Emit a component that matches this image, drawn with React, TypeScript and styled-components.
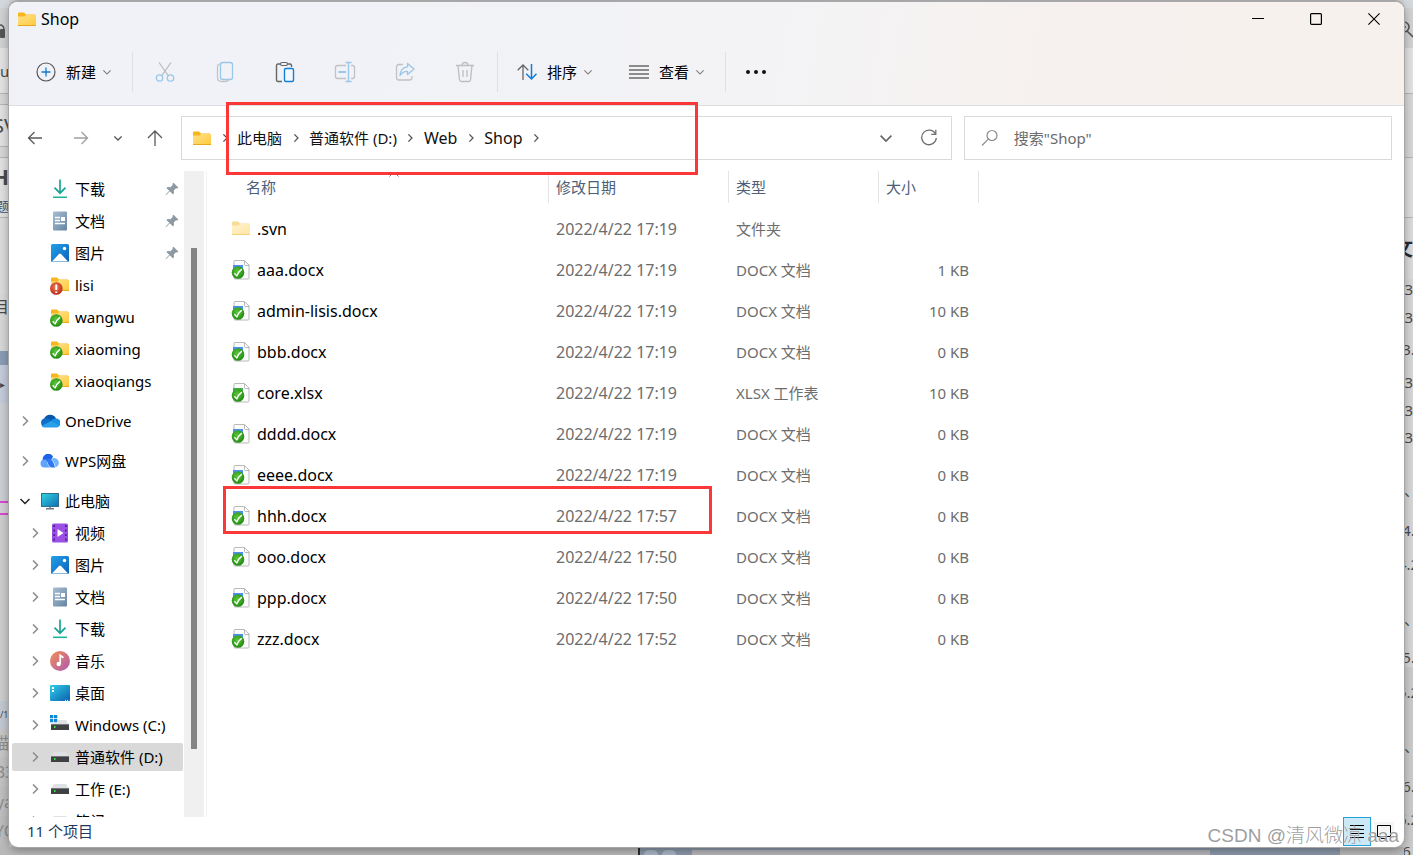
import React from "react";
import styled, { createGlobalStyle, css } from "styled-components";

const GlobalStyle = createGlobalStyle`
  *, *::before, *::after { box-sizing: border-box; }
  body {
    margin: 0;
    font-family: "Noto Sans", "Noto Sans CJK SC", sans-serif;
    font-size: 15px;
    line-height: 20px;
    color: #000;
  }
  button, input { font: inherit; color: inherit; }
`;

/* ---------- desktop and the page behind the window ---------- */

const Desktop = styled.div`
  position: relative;
  display: grid;
  grid-template-columns: 9px minmax(0, 1fr) 9px;
  grid-template-rows: minmax(0, 1fr) 8px;
  height: 100vh;
  min-height: 480px;
  overflow: hidden;
  background: #cfcfcf;
`;

const Strip = styled.div`
  grid-row: 1 / span 2;
  overflow: hidden;
  display: flex;
  flex-direction: column;
`;

const Piece = styled.div<{ $h: number; $bg?: string; $fg?: string; $size?: number; $bold?: boolean; $line?: boolean; $frame?: boolean; $at?: "start" | "center" | "end"; $low?: boolean }>`
  flex: none;
  display: flex;
  align-items: ${(p) => (p.$low ? "flex-end" : "center")};
  justify-content: ${(p) => p.$at ?? "start"};
  height: ${(p) => p.$h}px;
  background: ${(p) => p.$bg ?? "#d8d8d8"};
  color: ${(p) => p.$fg ?? "#4a4a4a"};
  font-size: ${(p) => p.$size ?? 16}px;
  font-weight: ${(p) => (p.$bold ? 700 : 400)};
  white-space: nowrap;
  overflow: hidden;
  ${(p) => p.$line && css`border-bottom: 1px solid #b4b4b4;`}
  ${(p) => p.$frame && css`border: solid #d84ad0; border-width: 2px 0;`}
`;

const BottomStrip = styled.div`
  grid-column: 2;
  grid-row: 2;
  display: grid;
  grid-template-columns: 629fr 702fr 64fr;
  background: #b9b9b9;
`;

const BrowserEdge = styled.div`
  display: flex;
  align-items: flex-end;
  gap: 4px;
  padding: 2px 130px 0 4px;
  border-left: 2px solid #2b2d33;
  background: #8b98aa;
`;

const RoundNub = styled.span`
  width: 14px;
  height: 5px;
  border-radius: 7px 7px 0 0;
  background: #a9b6c6;
`;

const UrlEdge = styled.span`
  flex: 1;
  height: 5px;
  margin-left: 12px;
  background: #b5b5ba;
`;

/* ---------- window ---------- */

const Window = styled.main`
  position: relative;
  grid-column: 2;
  grid-row: 1;
  z-index: 1;
  display: flex;
  flex-direction: column;
  margin-top: 1px;
  border-radius: 9px;
  overflow: hidden;
  background: #fff;
  border-top: 1px solid #a9a9ad;
  box-shadow: 0 0 0 1px #a6a6a6, 0 3px 10px rgba(0, 0, 0, 0.35);
`;

const Chrome = styled.header`
  flex: none;
  border-bottom: 1px solid #dedee2;
  background: linear-gradient(100deg, #f0f2f8 0%, #f1f2f7 25%, #f3f3f5 55%, #f6f1ee 75%, #f7f1ee 100%);
`;

const TitleBar = styled.div`
  display: flex;
  align-items: center;
  height: 36px;
  padding: 0 0 2px 8px;
`;

const Title = styled.h1`
  flex: 1;
  margin: 0 0 0 4px;
  font-size: 16px;
  font-weight: 400;
`;

const PlainButton = styled.button`
  display: flex;
  align-items: center;
  justify-content: center;
  padding: 0;
  border: 0;
  background: none;
`;

const CaptionButton = styled(PlainButton)`
  width: 58px;
  height: 34px;
`;

const CaptionButtons = styled.div`
  display: flex;
  margin-right: 1px;
`;

const Toolbar = styled.div`
  display: flex;
  align-items: center;
  height: 67px;
  padding-left: 11px;
`;

const MenuButton = styled(PlainButton)`
  height: 40px;
  padding: 0 21px 0 16px;
  gap: 10px;

  svg:last-child { margin-left: -3px; }
`;

const ToolButton = styled(PlainButton)`
  width: 60px;
  height: 40px;
`;

const ToolGroup = styled.div`
  display: flex;
  margin: 0 2px;
`;

const Divider = styled.span<{ $tight?: boolean }>`
  width: 1px;
  height: 40px;
  margin-right: ${(p) => (p.$tight ? 0 : 3)}px;
  background: #dfe0e5;
`;

/* ---------- address row ---------- */

const AddressRow = styled.div`
  position: relative;
  flex: none;
  display: flex;
  align-items: center;
  height: 65px;
  padding: 0 12px 1px 3px;
`;

const NavButton = styled(PlainButton)<{ $w?: number }>`
  flex: none;
  width: ${(p) => p.$w ?? 46}px;
  height: 40px;
`;

const Field = styled.div<{ $grow: number }>`
  flex: ${(p) => p.$grow} 1 0;
  min-width: 0;
  display: flex;
  align-items: center;
  height: 44px;
  border: 1px solid #d9d9d9;
  background: #fff;
`;

const AddressField = styled(Field)`
  margin: 0 12px 0 3px;
  padding-left: 10px;
`;

const Crumbs = styled.nav`
  flex: 1;
  display: flex;
  align-items: center;
  min-width: 0;
`;

const Crumb = styled.a<{ $latin?: boolean }>`
  color: #111;
  text-decoration: none;
  white-space: nowrap;
  font-size: ${(p) => (p.$latin ? 16 : 15)}px;
`;

const CrumbArrow = styled.span<{ $first?: boolean }>`
  display: flex;
  justify-content: center;
  flex: none;
  width: ${(p) => (p.$first ? 25 : 27)}px;
`;

const SearchField = styled(Field)`
  padding-left: 16px;
  gap: 15px;
`;

const SearchInput = styled.input`
  flex: 1;
  min-width: 0;
  border: 0;
  outline: 0;
  padding: 0;
  background: none;
  &::placeholder { color: #6b6b6b; opacity: 1; }
`;

const AddressMark = styled.span`
  position: absolute;
  z-index: 2;
  left: 217px;
  top: -4px;
  width: 472px;
  height: 73px;
  border: 3px solid #fb3737;
  pointer-events: none;
`;

/* ---------- body ---------- */

const Body = styled.div`
  flex: 1;
  min-height: 0;
  display: flex;
`;

const Tree = styled.nav`
  flex: none;
  width: 175px;
  padding: 0 1px 0 3px;
  overflow: hidden;
`;

const TreeItem = styled.a<{ $child?: boolean; $selected?: boolean; $gap?: boolean }>`
  display: flex;
  align-items: center;
  height: 28px;
  margin-top: ${(p) => (p.$gap ? 12 : 4)}px;
  padding: 0 4px 0 ${(p) => (p.$child ? 13 : 3)}px;
  border-radius: 2px;
  background: ${(p) => (p.$selected ? "#d9d9d9" : "none")};
  color: #000;
  text-decoration: none;
  white-space: nowrap;
`;

const Twisty = styled.span`
  flex: none;
  display: flex;
  justify-content: center;
  width: 20px;
`;

const TreeIcon = styled.span`
  flex: none;
  display: flex;
  justify-content: center;
  width: 20px;
  margin: 0 5px;
`;

const TreeLabel = styled.span`
  flex: 1;
`;

const ScrollTrack = styled.div`
  flex: none;
  display: flex;
  flex-direction: column;
  align-items: center;
  width: 20px;
  background: #f0f0f0;

  &::before { content: ""; flex: 77 0 0; }
  &::after { content: ""; flex: 68 0 0; }
`;

const ScrollThumb = styled.div`
  flex: 501 0 0;
  width: 6px;
  background: #858585;
`;

const Files = styled.section`
  flex: 1;
  min-width: 0;
  margin-left: 2px;
  border-left: 1px solid #f4f4f4;
  overflow: hidden;
`;

const FileTable = styled.table`
  width: 100%;
  table-layout: fixed;
  border-collapse: collapse;
`;

const Head = styled.th<{ $first?: boolean }>`
  position: relative;
  height: 37px;
  padding: 0 0 5px ${(p) => (p.$first ? 39 : 7)}px;
  line-height: 32px;
  text-align: left;
  font-weight: 400;
  color: #4c607a;
  background: linear-gradient(#e5e5e5, #e5e5e5) right top / 1px 32px no-repeat;
`;

const Filler = styled.td`
  padding: 0;
`;

const SortCaret = styled.span`
  position: absolute;
  top: 0;
  left: 39px;
  right: 8px;
  display: flex;
  justify-content: center;
`;

const Cell = styled.td<{ $right?: boolean; $latin?: boolean }>`
  height: 41px;
  padding: 0 ${(p) => (p.$right ? 10 : 0)}px 0 7px;
  font-size: ${(p) => (p.$latin ? 16 : 15)}px;
  text-align: ${(p) => (p.$right ? "right" : "left")};
  color: #6d6d6d;
  white-space: nowrap;
`;

const NameCell = styled(Cell)`
  position: relative;
  padding-left: 24px;
  color: #000;
`;

const FileName = styled.span`
  display: flex;
  align-items: center;
  gap: 6px;
`;

const RowMark = styled.span`
  position: absolute;
  z-index: 2;
  left: 16px;
  top: -9px;
  width: 489px;
  height: 48px;
  border: 3px solid #fb3737;
  pointer-events: none;
`;

/* ---------- status bar ---------- */

const StatusBar = styled.footer`
  flex: none;
  display: flex;
  align-items: center;
  height: 30px;
  padding: 0 10px 1px 18px;
  color: #1e395b;
`;

const Count = styled.span`
  flex: 1;
  padding-bottom: 1px;
`;

const ViewButton = styled.button<{ $on?: boolean }>`
  display: flex;
  align-items: center;
  justify-content: center;
  width: ${(p) => (p.$on ? 28 : 20)}px;
  height: ${(p) => (p.$on ? 29 : 20)}px;
  margin-left: 3px;
  padding: 0;
  border: ${(p) => (p.$on ? "1px solid #26a0da" : "0")};
  background: ${(p) => (p.$on ? "#cbe8f6" : "#f5f5f5")};
`;

const Watermark = styled.span`
  position: absolute;
  z-index: 3;
  right: 14px;
  bottom: 7px;
  font-family: "Liberation Sans", "Noto Sans CJK SC", sans-serif;
  font-weight: 300;
  font-size: 19px;
  line-height: 24px;
  color: rgba(140, 140, 140, 0.85);
  text-shadow: 0 0 1px #fff;
  pointer-events: none;
`;

/* ---------- icons ---------- */

const Svg = ({ w, h, children }: { w: number; h: number; children: React.ReactNode }) => (
  <svg width={w} height={h} viewBox={`0 0 ${w} ${h}`} fill="none" aria-hidden="true">
    {children}
  </svg>
);

const FolderShape = ({ pale }: { pale?: boolean }) => (
  <>
    <defs>
      <linearGradient id={pale ? "fp" : "fy"} x1="0" y1="0" x2="1" y2="1">
        <stop offset="0" stopColor={pale ? "#fff2cd" : "#ffe28a"} />
        <stop offset="1" stopColor={pale ? "#ffe6a3" : "#ffc93c"} />
      </linearGradient>
    </defs>
    <path d="M1 1.500q0-1 1-1h5l2 2h9v4H1z" fill={pale ? "#f7dc96" : "#f8b51c"} />
    <path d="M1 4.500h6.500l1.500-1.500h10v11H1z" fill={`url(#${pale ? "fp" : "fy"})`} />
    <path d="M1 13.500h18" stroke={pale ? "#f3d07c" : "#e8a91c"} />
  </>
);

const FolderIcon = ({ pale }: { pale?: boolean }) => (
  <Svg w={20} h={15}><FolderShape pale={pale} /></Svg>
);

const Badge = ({ cx, cy, error }: { cx: number; cy: number; error?: boolean }) => (
  <g transform={`translate(${cx} ${cy})`}>
    <defs>
      <radialGradient id={error ? "be" : "bo"} cx="0.45" cy="0.4" r="0.65">
        <stop offset="0" stopColor={error ? "#f08055" : "#5cc83a"} />
        <stop offset="1" stopColor={error ? "#b5220f" : "#1c850f"} />
      </radialGradient>
    </defs>
    <circle r="6.300" fill={`url(#${error ? "be" : "bo"})`} />
    {error ? (
      <path d="M0-4V1.400M0 3v1.600" stroke="#fff" strokeWidth="2" />
    ) : (
      <path d="M-3.600.8-1.200 3.400Q.6-1 3.800-3.400" stroke="#fff" strokeWidth="1.400" strokeLinejoin="round" />
    )}
  </g>
);

const BadgeFolder = ({ error }: { error?: boolean }) => (
  <Svg w={20} h={20}>
    <g transform="translate(0 2)"><FolderShape /></g>
    <Badge cx={6.3} cy={13.5} error={error} />
  </Svg>
);

const DocIcon = ({ sheet }: { sheet?: boolean }) => (
  <Svg w={20} h={22}>
    <path d="M4 1.500h9.500l4.500 4.500v13q0 1-1 1H4q-1 0-1-1V2.500q0-1 1-1z" fill="#fdfdfd" stroke="#b9b9b9" />
    <path d="M13.500 1.500v4q0 1 1 1h4" stroke="#b9b9b9" />
    <path d="M2 6h10v10H2z" fill={sheet ? "#3fae49" : "#4d8ff0"} />
    <Badge cx={7} cy={13.5} />
  </Svg>
);

const DownloadIcon = () => (
  <Svg w={20} h={20}>
    <path d="M10 .5V14M4.500 8.700 10 14.200l5.500-5.500" stroke="#1ba595" strokeWidth="1.700" />
    <path d="M3 18.300h14" stroke="#1fb39a" strokeWidth="1.600" />
  </Svg>
);

const DocumentIcon = () => (
  <Svg w={20} h={20}>
    <defs>
      <linearGradient id="dc" x1="0" y1="0" x2="1" y2="1">
        <stop offset="0" stopColor="#a9bfd4" />
        <stop offset="1" stopColor="#6484a3" />
      </linearGradient>
    </defs>
    <rect x="3" y="0.500" width="14" height="19" rx="1" fill="url(#dc)" />
    <path d="M5 6.500h5M5 9.500h5M5 12.500h10" stroke="#fff" strokeWidth="1.300" />
    <path d="M11 6h4v4h-4z" fill="#fff" />
  </Svg>
);

const PictureIcon = () => (
  <Svg w={20} h={20}>
    <defs>
      <linearGradient id="pc" x1="0" y1="0" x2="1" y2="1">
        <stop offset="0" stopColor="#22a0ea" />
        <stop offset="1" stopColor="#0d62b8" />
      </linearGradient>
    </defs>
    <rect x="1" y="1" width="18" height="18" rx="1.500" fill="url(#pc)" />
    <path d="M2 18.500 9 11q1-1 2 0l7 7.500z" fill="#fff" />
    <circle cx="14.500" cy="5.500" r="1.700" fill="#fff" />
  </Svg>
);

const OneDriveIcon = () => (
  <Svg w={20} h={14}>
    <path d="M4 5a6.500 6.500 0 0 1 12-.5l-6 5z" fill="#0a56ad" />
    <path d="M4.500 4.300a4.600 4.600 0 0 0 .5 9l8-6-3-2q-2.500-1.500-5.500-1z" fill="#0f6fc8" />
    <path d="M11 7a4.600 4.600 0 0 1 5-2.500 4.400 4.400 0 0 1 .3 8.800z" fill="#1b8fe3" />
    <path d="M1.500 12 11 7l8.500 4.500q-1 2-3.500 2H4.500Q2.500 13.400 1.500 12z" fill="#28a0ea" />
  </Svg>
);

const WpsIcon = () => (
  <Svg w={20} h={14}>
    <path d="M3 7A5.500 5.500 0 0 1 13 2.500L10 8z" fill="#1e62e8" />
    <path d="M4.500 5.500a4 4 0 0 0 0 8h6Q7 11 6.500 5.700z" fill="#5fa5fb" />
    <path d="M7 4.500q6-1 8 9h-4Q7 11 7 4.500z" fill="#2f78f0" />
    <path d="M11 5q4-2.500 7 1 2.500 5-2.500 7.500Q15 8 11 5z" fill="#70b6fc" />
  </Svg>
);

const PcIcon = () => (
  <Svg w={20} h={18}>
    <defs>
      <linearGradient id="mn" x1="0" y1="0" x2="1" y2="1">
        <stop offset="0" stopColor="#2fd3e0" />
        <stop offset="1" stopColor="#0f6fb5" />
      </linearGradient>
    </defs>
    <rect x="1.500" y="1.500" width="17" height="13" fill="url(#mn)" stroke="#2f6f8c" />
    <path d="M10 15v2M6 16.700h8" stroke="#6b7782" strokeWidth="1.400" />
  </Svg>
);

const VideoIcon = () => (
  <Svg w={20} h={20}>
    <rect x="2" y="0.500" width="16" height="19" rx="1.500" fill="#9a50e4" />
    <path d="M4.200 2v17M15.800 2v17" stroke="#4d1c8e" strokeWidth="1.600" strokeDasharray="2 2.500" />
    <path d="m7.500 6 6 4-6 4z" fill="#fff" />
  </Svg>
);

const MusicIcon = () => (
  <Svg w={20} h={20}>
    <defs>
      <linearGradient id="mu" x1="0" y1="0" x2="1" y2="1">
        <stop offset="0" stopColor="#f09055" />
        <stop offset="1" stopColor="#b057b0" />
      </linearGradient>
    </defs>
    <circle cx="10" cy="10" r="10" fill="url(#mu)" />
    <circle cx="8.700" cy="13" r="2.200" fill="#fff" />
    <path d="M10.200 13V4.500l3.200 2.300" stroke="#fff" strokeWidth="1.700" />
  </Svg>
);

const DesktopIcon = () => (
  <Svg w={20} h={16}>
    <defs>
      <linearGradient id="dk" x1="0" y1="0" x2="1" y2="1">
        <stop offset="0" stopColor="#2fcfe8" />
        <stop offset="1" stopColor="#0b5fae" />
      </linearGradient>
    </defs>
    <rect width="20" height="16" rx="1" fill="url(#dk)" />
    <path d="M3 2v2M3 5v2" stroke="#fff" strokeWidth="2" />
    <path d="M15 15.300h1M17 15.300h1" stroke="#fff" />
  </Svg>
);

const DriveIcon = ({ system }: { system?: boolean }) => (
  <Svg w={20} h={20}>
    <path d="M4 5h12l3 4.500H1z" fill="#dfe1e4" />
    <rect x="1" y="9" width="18" height="6" fill="#3f4245" />
    <path d="M1 9.500h18" stroke="#777a7d" />
    <rect x="4" y="11" width="1.500" height="2" fill="#3ce03c" />
    {system && (
      <>
        <path d="M0-1h8v9H0z" fill="#fff" />
        <path d="M0 0h3.300v3.300H0zM4 0h3.300v3.300H4zM0 4h3.300v3.300H0zM4 4h3.300v3.300H4z" fill="#1187d8" />
      </>
    )}
  </Svg>
);

const PinIcon = () => (
  <Svg w={14} h={14}>
    <path d="M8.500.7 13.300 5.500l-.9 1-1.400-.3-2.200 2.200.2 2.800-1.200 1L4.800 9.300 1.200 13l-.6-.6 3.700-3.600L1.500 6.300l1-1.200 2.900.2L7.700 3l-.2-1.300z" fill="#8d9aa3" />
  </Svg>
);

const Chevron = ({ dir, size = 10, color = "#7a7a7a", stroke = 1.4 }: { dir: "right" | "down"; size?: number; color?: string; stroke?: number }) => (
  <svg width={size} height={size} viewBox="0 0 10 10" fill="none" aria-hidden="true">
    <path d={dir === "right" ? "m3 .5 4.500 4.500L3 9.500" : "M.5 3 5 7.500 9.500 3"} stroke={color} strokeWidth={stroke} />
  </svg>
);

const PlusCircle = () => (
  <Svg w={20} h={20}>
    <circle cx="10" cy="10" r="9" stroke="#555" strokeWidth="1.200" />
    <path d="M10 5.500v9M5.500 10h9" stroke="#0f7bd0" strokeWidth="1.300" />
  </Svg>
);

const CutIcon = () => (
  <Svg w={20} h={22}>
    <path d="M4 1.500 13.500 15M16 1.500 6.500 15" stroke="#b9bbc0" strokeWidth="1.300" />
    <circle cx="4.500" cy="17" r="3.200" stroke="#9ac6e8" strokeWidth="1.300" />
    <circle cx="15.500" cy="17" r="3.200" stroke="#9ac6e8" strokeWidth="1.300" />
  </Svg>
);

const CopyIcon = () => (
  <Svg w={18} h={22}>
    <path d="M3.500 3Q1.500 3.500 1.500 6v10.500q0 4 4 4h4q2.500 0 3-1.500" stroke="#c2c4c8" strokeWidth="1.300" />
    <rect x="4.500" y="1.500" width="12" height="17" rx="2.200" stroke="#9ac6e8" strokeWidth="1.300" />
  </Svg>
);

const PasteIcon = () => (
  <Svg w={20} h={22}>
    <path d="M5.500 3H3Q1.500 3 1.500 4.500v14Q1.500 20.500 3 20.500h4M12.500 3H15q1.500 0 1.500 1.500V6" stroke="#666" strokeWidth="1.400" />
    <rect x="5.500" y="1.500" width="7" height="3" rx="1.500" stroke="#666" strokeWidth="1.200" />
    <rect x="9.500" y="7.500" width="9" height="13" rx="1.500" fill="#f4f8fd" stroke="#1180d6" strokeWidth="1.400" />
  </Svg>
);

const RenameIcon = () => (
  <Svg w={22} h={22}>
    <path d="M12 4.500H3.500q-2 0-2 2v9q0 2 2 2H12M17 4.500h1.500q2 0 2 2v9q0 2-2 2H17" stroke="#bfc1c5" strokeWidth="1.300" />
    <path d="M4.500 11H12" stroke="#9ac6e8" strokeWidth="2" />
    <path d="M11.500 1.500h6M11.500 20.500h6M14.500 1.500v19" stroke="#9ac6e8" strokeWidth="1.400" />
  </Svg>
);

const ShareIcon = () => (
  <Svg w={20} h={20}>
    <path d="M8 2.500H4q-2.500 0-2.500 2.500v10.500Q1.500 18 4 18h10.500q2.500 0 2.500-2.500V14" stroke="#bfc1c5" strokeWidth="1.300" />
    <path d="m12.500 1.500 6.500 5.500-6.500 5.500V9.300Q8 9 5 13.500 5.500 5.500 12.500 4.800z" stroke="#9ac6e8" strokeWidth="1.300" strokeLinejoin="round" />
  </Svg>
);

const TrashIcon = () => (
  <Svg w={20} h={22}>
    <path d="M1 4.500h18M7 4.500q0-3 3-3t3 3M3 4.500 4.500 19q.2 1.500 1.700 1.500h7.600q1.500 0 1.700-1.500L17 4.500M8 9v7M12 9v7" stroke="#bcbec2" strokeWidth="1.300" />
  </Svg>
);

const SortIcon = () => (
  <Svg w={20} h={18}>
    <path d="M6 17V2M.7 7.300 6 2l5.300 5.300" stroke="#666" strokeWidth="1.300" />
    <path d="M14.500 1v15M9.200 10.700 14.500 16l5-5.300" stroke="#0f7bd8" strokeWidth="1.500" />
  </Svg>
);

const ListIcon = () => (
  <Svg w={20} h={14}>
    <path d="M0 1h20M0 5h20M0 9h20M0 13h20" stroke="#6a6a6a" strokeWidth="1.300" />
  </Svg>
);

const DotsIcon = () => (
  <Svg w={20} h={4}>
    <circle cx="2" cy="2" r="2" fill="#111" />
    <circle cx="10" cy="2" r="2" fill="#111" />
    <circle cx="18" cy="2" r="2" fill="#111" />
  </Svg>
);

const ArrowIcon = ({ dir, color }: { dir: "left" | "right" | "up"; color: string }) => (
  <svg width="16" height="16" viewBox="0 0 16 16" fill="none" aria-hidden="true">
    <path
      d={
        dir === "left"
          ? "M15 8H1.500M7.500 2 1.500 8l6 6"
          : dir === "right"
          ? "M1 8h13.500M8.500 2l6 6-6 6"
          : "M8 16V1M1 8l7-7 7 7"
      }
      stroke={color}
      strokeWidth="1.300"
    />
  </svg>
);

const RefreshIcon = () => (
  <Svg w={18} h={18}>
    <path d="M15.500 5A7.300 7.300 0 1 0 16.300 9" stroke="#6e6e6e" strokeWidth="1.300" />
    <path d="M15.800.8v4.500h-4.500" stroke="#6e6e6e" strokeWidth="1.300" />
  </Svg>
);

const SearchIcon = () => (
  <Svg w={18} h={18}>
    <circle cx="11" cy="6.500" r="5" stroke="#8b8b8b" strokeWidth="1.200" />
    <path d="M7.300 10.200 1 16.500" stroke="#8b8b8b" strokeWidth="1.200" />
  </Svg>
);

/* ---------- data ---------- */

type Place = { label: string; icon: React.ReactNode; child?: boolean; gap?: boolean; pinned?: boolean; twisty?: "right" | "down"; selected?: boolean };

const places: Place[] = [
  { label: "下载", icon: <DownloadIcon />, child: true, pinned: true },
  { label: "文档", icon: <DocumentIcon />, child: true, pinned: true },
  { label: "图片", icon: <PictureIcon />, child: true, pinned: true },
  { label: "lisi", icon: <BadgeFolder error />, child: true },
  { label: "wangwu", icon: <BadgeFolder />, child: true },
  { label: "xiaoming", icon: <BadgeFolder />, child: true },
  { label: "xiaoqiangs", icon: <BadgeFolder />, child: true },
  { label: "OneDrive", icon: <OneDriveIcon />, gap: true, twisty: "right" },
  { label: "WPS网盘", icon: <WpsIcon />, gap: true, twisty: "right" },
  { label: "此电脑", icon: <PcIcon />, gap: true, twisty: "down" },
  { label: "视频", icon: <VideoIcon />, child: true, twisty: "right" },
  { label: "图片", icon: <PictureIcon />, child: true, twisty: "right" },
  { label: "文档", icon: <DocumentIcon />, child: true, twisty: "right" },
  { label: "下载", icon: <DownloadIcon />, child: true, twisty: "right" },
  { label: "音乐", icon: <MusicIcon />, child: true, twisty: "right" },
  { label: "桌面", icon: <DesktopIcon />, child: true, twisty: "right" },
  { label: "Windows (C:)", icon: <DriveIcon system />, child: true, twisty: "right" },
  { label: "普通软件 (D:)", icon: <DriveIcon />, child: true, twisty: "right", selected: true },
  { label: "工作 (E:)", icon: <DriveIcon />, child: true, twisty: "right" },
  { label: "笔记 (F:)", icon: <DriveIcon />, child: true, twisty: "right" },
];

type FileRow = { name: string; date: string; kind: "folder" | "doc" | "sheet"; size: string; marked?: boolean };

const files: FileRow[] = [
  { name: ".svn", date: "2022/4/22 17:19", kind: "folder", size: "" },
  { name: "aaa.docx", date: "2022/4/22 17:19", kind: "doc", size: "1 KB" },
  { name: "admin-lisis.docx", date: "2022/4/22 17:19", kind: "doc", size: "10 KB" },
  { name: "bbb.docx", date: "2022/4/22 17:19", kind: "doc", size: "0 KB" },
  { name: "core.xlsx", date: "2022/4/22 17:19", kind: "sheet", size: "10 KB" },
  { name: "dddd.docx", date: "2022/4/22 17:19", kind: "doc", size: "0 KB" },
  { name: "eeee.docx", date: "2022/4/22 17:19", kind: "doc", size: "0 KB" },
  { name: "hhh.docx", date: "2022/4/22 17:57", kind: "doc", size: "0 KB", marked: true },
  { name: "ooo.docx", date: "2022/4/22 17:50", kind: "doc", size: "0 KB" },
  { name: "ppp.docx", date: "2022/4/22 17:50", kind: "doc", size: "0 KB" },
  { name: "zzz.docx", date: "2022/4/22 17:52", kind: "doc", size: "0 KB" },
];

const kindLabel = { folder: "文件夹", doc: "DOCX 文档", sheet: "XLSX 工作表" };

const crumbs = [
  { label: "此电脑" },
  { label: "普通软件 (D:)" },
  { label: "Web", latin: true },
  { label: "Shop", latin: true },
];

const outline = [
  [20, "3"], [28, "3"], [32, "3."], [33, "3"], [28, "3"], [27, "3"], [53, "、"], [40, "4."], [34, "4.2"],
  [55, "、"], [38, "5."], [35, "5.2"], [54, "、"], [40, "6."], [33, "6.2"], [32, "6."],
] as const;

/* ---------- parts ---------- */

const LeftEdge = () => (
  <Strip aria-hidden="true">
    <Piece $h={8} $bg="#d3d8dc" />
    <Piece $h={40} $bg="#cfd1d3" $low>
      <Svg w={6} h={24}>
        <path d="M0 1q4 0 4 5" stroke="#555" strokeWidth="1.500" />
        <rect y="5" width="5" height="9" rx="1" fill="#555" />
      </Svg>
    </Piece>
    <Piece $h={46} $bg="#e2e2e2" $line $size={15}>u</Piece>
    <Piece $h={11} $bg="#d6d6d6" $line />
    <Piece $h={42} $bg="#e0e0e0" $line $size={20} $at="center">SV</Piece>
    <Piece $h={11} $bg="#d6d6d6" $line />
    <Piece $h={36} $bg="#e0e0e0" $size={22} $bold $at="end">H</Piece>
    <Piece $h={24} $bg="#e0e0e0" $line $size={13} $fg="#3d5a7a" $at="end">题</Piece>
    <Piece $h={76} $bg="#dadada" />
    <Piece $h={26} $bg="#d8d8d8" $size={16} $at="end">目</Piece>
    <Piece $h={31} $bg="#d6d6d6" />
    <Piece $h={14} $bg="#8a9cb4" />
    <Piece $h={38} $bg="#c3cad8" $size={10}>▸</Piece>
    <Piece $h={98} $bg="#cbced2" />
    <Piece $h={14} $bg="#d3cfd6" $frame />
    <Piece $h={186} $bg="#cccccc" />
    <Piece $h={28} $bg="#c2c8d2" $size={9}>/12</Piece>
    <Piece $h={28} $bg="#c6c6c6" $fg="#8c8c8c" $at="end">描</Piece>
    <Piece $h={30} $bg="#c2c2c2" $fg="#8c8c8c" $at="center">B3</Piece>
    <Piece $h={29} $bg="#bfbfbf" $fg="#8c8c8c" $at="center">ya</Piece>
    <Piece $h={29} $bg="#bcbcbc" $fg="#8c8c8c" $at="center">YC</Piece>
    <Piece $h={12} $bg="#b9b9b9" />
  </Strip>
);

const RightEdge = () => (
  <Strip aria-hidden="true">
    <Piece $h={8} $bg="#d3d8dc" />
    <Piece $h={40} $bg="#cfd1d3">
      <Svg w={9} h={20}>
        <path d="M0 4a5 5 0 0 1 0 10M3 13l6 6M0 9h2" stroke="#555" strokeWidth="1.600" />
      </Svg>
    </Piece>
    <Piece $h={46} $bg="#e2e2e2" $line />
    <Piece $h={64} $bg="#d6d6d6" $line />
    <Piece $h={60} $bg="#dddddd" $line />
    <Piece $h={61} $bg="#dadada" $fg="#2a2a2a" $size={20} $bold $at="end">文</Piece>
    {outline.map(([h, text], i) => (
      <Piece
        key={i}
        $h={h}
        $bg={i > 10 ? "#cbcbcb" : "#d6d6d6"}
        $size={15}
        $low
        $at={text === "、" ? "start" : text === "3" ? "end" : "center"}
      >
        {text}
      </Piece>
    ))}
  </Strip>
);

const MenuItem = ({ icon, label }: { icon: React.ReactNode; label: string }) => (
  <MenuButton type="button">
    {icon}
    {label}
    <Chevron dir="down" size={8} color="#777" stroke={1.3} />
  </MenuButton>
);

const tools: [string, React.ReactNode][] = [
  ["剪切", <CutIcon />],
  ["复制", <CopyIcon />],
  ["粘贴", <PasteIcon />],
  ["重命名", <RenameIcon />],
  ["共享", <ShareIcon />],
  ["删除", <TrashIcon />],
];

export default function App() {
  return (
    <>
      <GlobalStyle />
      <Desktop>
        <LeftEdge />
        <Window>
          <Chrome>
            <TitleBar>
              <FolderIcon />
              <Title>Shop</Title>
              <CaptionButtons>
                <CaptionButton type="button" aria-label="最小化">
                  <Svg w={12} h={12}><path d="M0 5.500h12" stroke="#000" /></Svg>
                </CaptionButton>
                <CaptionButton type="button" aria-label="最大化">
                  <Svg w={12} h={12}><rect x="0.600" y="0.600" width="10.800" height="10.800" rx="1" stroke="#000" strokeWidth="1.200" /></Svg>
                </CaptionButton>
                <CaptionButton type="button" aria-label="关闭">
                  <Svg w={12} h={12}><path d="m.4.4 11.200 11.200M11.600.4.4 11.600" stroke="#000" strokeWidth="1.100" /></Svg>
                </CaptionButton>
              </CaptionButtons>
            </TitleBar>
            <Toolbar>
              <MenuItem icon={<PlusCircle />} label="新建" />
              <Divider $tight />
              <ToolGroup>
                {tools.map(([label, icon]) => (
                  <ToolButton key={label} type="button" aria-label={label}>{icon}</ToolButton>
                ))}
              </ToolGroup>
              <Divider />
              <MenuItem icon={<SortIcon />} label="排序" />
              <MenuItem icon={<ListIcon />} label="查看" />
              <Divider $tight />
              <ToolButton type="button" aria-label="更多"><DotsIcon /></ToolButton>
            </Toolbar>
          </Chrome>

          <AddressRow>
            <NavButton type="button" aria-label="后退"><ArrowIcon dir="left" color="#5a5a5a" /></NavButton>
            <NavButton type="button" aria-label="前进"><ArrowIcon dir="right" color="#a0a0a0" /></NavButton>
            <NavButton type="button" aria-label="最近" $w={28}><Chevron dir="down" size={8} color="#555" stroke={1.6} /></NavButton>
            <NavButton type="button" aria-label="向上"><ArrowIcon dir="up" color="#5a5a5a" /></NavButton>
            <AddressField $grow={37}>
              <FolderIcon />
              <Crumbs aria-label="路径">
                <CrumbArrow $first><Chevron dir="right" size={8} color="#555" stroke={1.6} /></CrumbArrow>
                {crumbs.map((c) => (
                  <React.Fragment key={c.label}>
                    <Crumb href="#" $latin={c.latin}>{c.label}</Crumb>
                    <CrumbArrow><Chevron dir="right" size={8} color="#555" stroke={1.6} /></CrumbArrow>
                  </React.Fragment>
                ))}
              </Crumbs>
              <NavButton type="button" aria-label="历史" $w={43}><Chevron dir="down" size={12} color="#666" /></NavButton>
              <NavButton type="button" aria-label="刷新" $w={43}><RefreshIcon /></NavButton>
            </AddressField>
            <SearchField $grow={20}>
              <SearchIcon />
              <SearchInput type="text" aria-label="搜索" placeholder={'搜索"Shop"'} />
            </SearchField>
            <AddressMark />
          </AddressRow>

          <Body>
            <Tree aria-label="导航窗格">
              {places.map((p, i) => (
                <TreeItem key={i} href="#" $child={p.child} $gap={p.gap} $selected={p.selected}>
                  <Twisty>
                    {p.twisty && (
                      <Chevron dir={p.twisty} size={10} color={p.twisty === "down" ? "#222" : "#8a8a8a"} stroke={1.5} />
                    )}
                  </Twisty>
                  <TreeIcon>{p.icon}</TreeIcon>
                  <TreeLabel>{p.label}</TreeLabel>
                  {p.pinned && <PinIcon />}
                </TreeItem>
              ))}
            </Tree>
            <ScrollTrack><ScrollThumb /></ScrollTrack>
            <Files>
              <FileTable>
                <colgroup>
                  <col width={342} />
                  <col width={180} />
                  <col width={150} />
                  <col width={100} />
                  <col />
                </colgroup>
                <thead>
                  <tr>
                    <Head scope="col" $first>
                      名称
                      <SortCaret>
                        <Svg w={10} h={6}><path d="m.5 5.500 4.500-4.500 4.500 4.500" stroke="#777" /></Svg>
                      </SortCaret>
                    </Head>
                    <Head scope="col">修改日期</Head>
                    <Head scope="col">类型</Head>
                    <Head scope="col">大小</Head>
                    <Filler />
                  </tr>
                </thead>
                <tbody>
                  {files.map((f) => (
                    <tr key={f.name}>
                      <NameCell $latin>
                        <FileName>
                          {f.kind === "folder" ? <FolderIcon pale /> : <DocIcon sheet={f.kind === "sheet"} />}
                          {f.name}
                        </FileName>
                        {f.marked && <RowMark />}
                      </NameCell>
                      <Cell $latin>{f.date}</Cell>
                      <Cell>{kindLabel[f.kind]}</Cell>
                      <Cell $right>{f.size}</Cell>
                      <Filler />
                    </tr>
                  ))}
                </tbody>
              </FileTable>
            </Files>
          </Body>

          <StatusBar>
            <Count>11 个项目</Count>
            <ViewButton type="button" aria-label="详细信息" $on>
              <Svg w={16} h={14}><path d="M1 .5h14M1 4.500h14M1 8.500h14M1 12.500h14" stroke="#000" /></Svg>
            </ViewButton>
            <ViewButton type="button" aria-label="大图标">
              <Svg w={14} h={14}><path d="M.5.500h13v11H.500zM4 13.500h6" stroke="#000" /></Svg>
            </ViewButton>
          </StatusBar>
        </Window>
        <RightEdge />
        <BottomStrip>
          <span />
          <BrowserEdge>
            <RoundNub />
            <RoundNub />
            <UrlEdge />
          </BrowserEdge>
        </BottomStrip>
        <Watermark>CSDN @清风微凉 aaa</Watermark>
      </Desktop>
    </>
  );
}
